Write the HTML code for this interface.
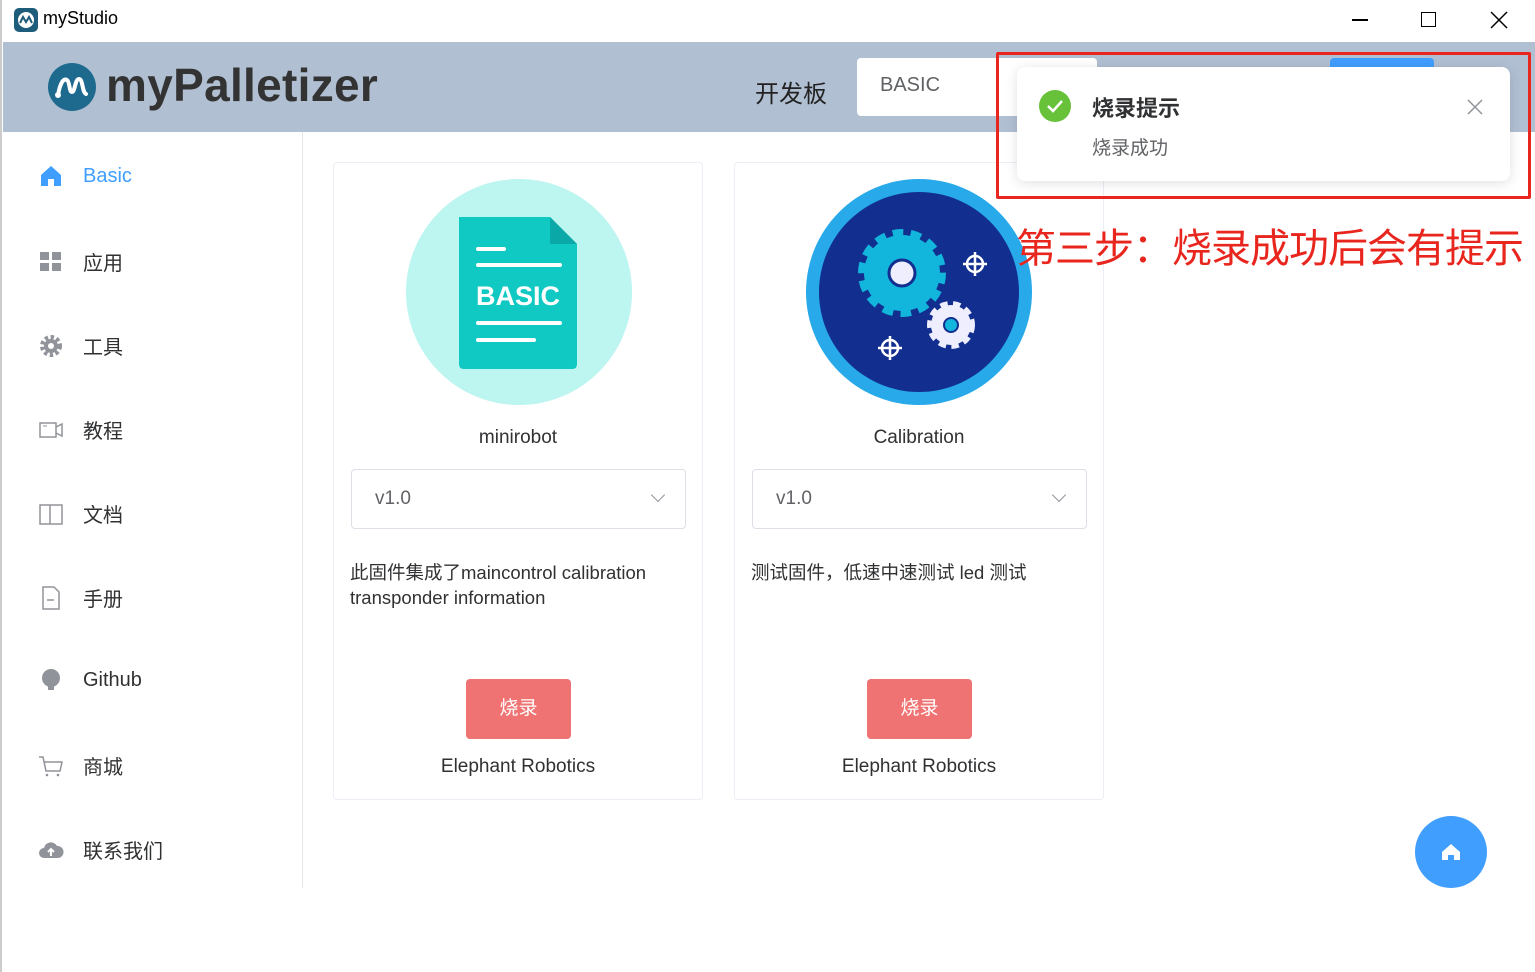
<!DOCTYPE html>
<html><head><meta charset="utf-8"><style>
*{box-sizing:border-box;margin:0;padding:0}
body{width:1535px;height:972px;background:#fff;font-family:"Liberation Sans","Noto Sans CJK SC",sans-serif;position:relative;overflow:hidden;color:#303133}
.abs{position:absolute}
.nav{position:absolute;left:38px;display:flex;align-items:center;font-size:20px;color:#303133}
.nav svg{width:26px;height:26px;margin-right:19px}
.card{position:absolute;top:162px;width:370px;height:638px;border:1px solid #ebeef5;border-radius:4px;background:#fff}
.card .name{position:absolute;top:264px;width:100%;text-align:center;font-size:19px}
.sel{position:absolute;left:17px;top:306px;width:335px;height:60px;border:1px solid #dcdfe6;border-radius:4px;font-size:19px;color:#606266;padding:18px 23px}
.sel:after{content:"";position:absolute;right:22px;top:20px;width:9px;height:9px;border-right:1.5px solid #909399;border-bottom:1.5px solid #909399;transform:rotate(45deg)}
.desc{position:absolute;left:16px;top:397px;width:340px;font-size:18.5px;line-height:25px;color:#303133}
.btn{position:absolute;left:132px;top:516px;width:105px;height:60px;background:#f07373;border-radius:4px;color:#fff;font-size:19px;text-align:center;line-height:60px}
.foot{position:absolute;top:593px;width:100%;text-align:center;font-size:19px}
</style></head><body>
<div class="abs" style="left:0;top:0;width:1535px;height:42px;background:#fff"></div>
<div class="abs" style="left:14px;top:8px;width:24px;height:24px;border-radius:5px;background:#1d5c7a"><svg width="24" height="24"><circle cx="12" cy="12" r="8" fill="#fff"/><path d="M6 15 L9 9 L12 14 L15 9 L18 15" stroke="#1d5c7a" stroke-width="2" fill="none"/></svg></div>
<div class="abs" style="left:43px;top:8px;font-size:18px;color:#000">myStudio</div>
<div class="abs" style="left:1352px;top:19px;width:16px;height:1.5px;background:#000"></div>
<div class="abs" style="left:1421px;top:12px;width:15px;height:15px;border:1.5px solid #000"></div>
<svg class="abs" style="left:1490px;top:11px" width="18" height="18"><path d="M1 1L17 17M17 1L1 17" stroke="#000" stroke-width="1.5"/></svg>
<div class="abs" style="left:0;top:0;width:2px;height:972px;background:#ccc"></div>

<div class="abs" style="left:3px;top:42px;width:1532px;height:90px;background:#b0bfd2"></div>
<svg class="abs" style="left:47px;top:62px" width="50" height="50"><circle cx="25" cy="25" r="24" fill="#1d6a8e"/><path d="M11 33 C13 22 16 16 20 18 C23 20 22 30 25 30 C28 30 28 17 32 17 C36 17 35 30 39 32" stroke="#fff" stroke-width="4" fill="none" stroke-linecap="round"/><circle cx="11" cy="33" r="3" fill="#fff"/></svg>
<div class="abs" style="left:106px;top:58px;font-size:46px;font-weight:bold;color:#333;letter-spacing:0.3px">myPalletizer</div>
<div class="abs" style="left:755px;top:74px;font-size:24px;color:#222">开发板</div>
<div class="abs" style="left:857px;top:58px;width:240px;height:58px;background:#fff;border-radius:4px;font-size:20px;color:#606266;padding:16px 23px">BASIC</div>
<div class="abs" style="left:1330px;top:58px;width:104px;height:58px;background:#409eff;border-radius:4px"></div>

<div class="abs" style="left:302px;top:132px;width:1px;height:756px;background:#e6e6e6"></div>
<div class="nav" style="top:163px;color:#409eff"><svg viewBox="0 0 26 26"><path d="M3 12 L13 3 L23 12 V23 H16 V16 H10 V23 H3Z" fill="#409eff"/></svg>Basic</div>
<div class="nav" style="top:247px"><svg viewBox="0 0 26 26"><rect x="2" y="3" width="9" height="8" fill="#909399"/><rect x="14" y="3" width="9" height="8" fill="#909399"/><rect x="2" y="14" width="9" height="8" fill="#909399"/><rect x="14" y="14" width="9" height="8" fill="#909399"/></svg>应用</div>
<div class="nav" style="top:331px"><svg viewBox="0 0 26 26"><circle cx="13" cy="13" r="8" fill="none" stroke="#909399" stroke-width="6" stroke-dasharray="3 2.3"/><circle cx="13" cy="13" r="7" fill="#909399"/><circle cx="13" cy="13" r="3" fill="#fff"/></svg>工具</div>
<div class="nav" style="top:415px"><svg viewBox="0 0 26 26"><rect x="2" y="6" width="16" height="14" fill="none" stroke="#909399" stroke-width="1.5"/><path d="M18 10 L24 7 V19 L18 16" fill="none" stroke="#909399" stroke-width="1.5"/><path d="M5 9H9" stroke="#909399"/></svg>教程</div>
<div class="nav" style="top:499px"><svg viewBox="0 0 26 26"><path d="M2 4H12V23H2Z M12 4H24V23H12" fill="none" stroke="#909399" stroke-width="1.5"/></svg>文档</div>
<div class="nav" style="top:583px"><svg viewBox="0 0 26 26"><path d="M5 2H16L21 7V24H5Z" fill="none" stroke="#909399" stroke-width="1.5"/><path d="M9 15H16" stroke="#909399" stroke-width="1.5"/></svg>手册</div>
<div class="nav" style="top:667px"><svg viewBox="0 0 26 26"><circle cx="13" cy="11" r="9" fill="#909399"/><rect x="10" y="19" width="6" height="4" fill="#909399"/></svg>Github</div>
<div class="nav" style="top:751px"><svg viewBox="0 0 26 26"><path d="M1 4H5L8 18H22L24 9H6" fill="none" stroke="#909399" stroke-width="1.5"/><circle cx="9" cy="22" r="1.3" fill="#909399"/><circle cx="20" cy="22" r="1.3" fill="#909399"/></svg>商城</div>
<div class="nav" style="top:835px"><svg viewBox="0 0 26 26"><path d="M6 21 A5 5 0 0 1 6 11 A7 7 0 0 1 19 9 A6 6 0 0 1 20 21Z" fill="#909399"/><path d="M13 19V12M10 15L13 12L16 15" stroke="#fff" stroke-width="2" fill="none"/></svg>联系我们</div>

<div class="card" style="left:333px">
<svg class="abs" style="left:72px;top:16px" width="226" height="226"><circle cx="113" cy="113" r="113" fill="#bdf5f0"/><path d="M53 38 H144 L171 65 V185 Q171 190 166 190 H58 Q53 190 53 185Z" fill="#10c9c3"/><path d="M144 38 L171 65 H144Z" fill="#0aa9a8"/><g stroke="#fff" stroke-width="4" stroke-linecap="round"><path d="M72 70H98M72 86H154M72 144H154M72 161H128"/></g><text x="112" y="126" text-anchor="middle" fill="#fff" font-family="Liberation Sans" font-weight="bold" font-size="27">BASIC</text></svg>
<div class="name">minirobot</div>
<div class="sel">v1.0</div>
<div class="desc">此固件集成了maincontrol calibration transponder information</div>
<div class="btn">烧录</div>
<div class="foot">Elephant Robotics</div>
</div>
<div class="card" style="left:734px">
<svg class="abs" style="left:71px;top:16px" width="226" height="226"><circle cx="113" cy="113" r="113" fill="#28a9ea"/><circle cx="113" cy="113" r="100" fill="#122f8f"/><circle cx="96" cy="94" r="38" fill="#12b5dc" stroke="#12b5dc" stroke-width="12" stroke-dasharray="10 7"/><circle cx="96" cy="94" r="13" fill="#eef" stroke="#122f8f" stroke-width="3"/><circle cx="145" cy="146" r="20" fill="#eef" stroke="#eef" stroke-width="8" stroke-dasharray="7 5"/><circle cx="145" cy="146" r="7" fill="#12b5dc" stroke="#122f8f" stroke-width="2"/><g stroke="#fff" stroke-width="2.5" fill="none"><circle cx="169" cy="85" r="8"/><path d="M169 73V97M157 85H181"/><circle cx="84" cy="169" r="8"/><path d="M84 157V181M72 169H96"/></g></svg>
<div class="name">Calibration</div>
<div class="sel">v1.0</div>
<div class="desc">测试固件，低速中速测试 led 测试</div>
<div class="btn">烧录</div>
<div class="foot">Elephant Robotics</div>
</div>

<div class="abs" style="left:1017px;top:67px;width:493px;height:114px;background:#fff;border-radius:8px;box-shadow:0 2px 12px rgba(0,0,0,.12)"></div>
<svg class="abs" style="left:1039px;top:90px" width="32" height="32"><circle cx="16" cy="16" r="16" fill="#67c23a"/><path d="M9 16L14 21L23 11" stroke="#fff" stroke-width="2.5" fill="none"/></svg>
<div class="abs" style="left:1092px;top:91px;font-size:22px;font-weight:bold;color:#303133">烧录提示</div>
<div class="abs" style="left:1092px;top:133px;font-size:19px;color:#606266">烧录成功</div>
<svg class="abs" style="left:1467px;top:99px" width="16" height="16"><path d="M1 1L15 15M15 1L1 15" stroke="#909399" stroke-width="1.5"/></svg>
<div class="abs" style="left:996px;top:52px;width:535px;height:147px;border:3px solid #e8261e;border-radius:2px"></div>
<div class="abs" style="left:1016px;top:216px;font-size:40px;color:#e8261e;white-space:nowrap;letter-spacing:-1px">第三步：烧录成功后会有提示</div>

<div class="abs" style="left:1415px;top:816px;width:72px;height:72px;border-radius:50%;background:#409eff"></div>
<svg class="abs" style="left:1441px;top:843px" width="20" height="18"><path d="M1 9L10 1L19 9V17H13V12H7V17H1Z" fill="#fff"/></svg>
</body></html>
